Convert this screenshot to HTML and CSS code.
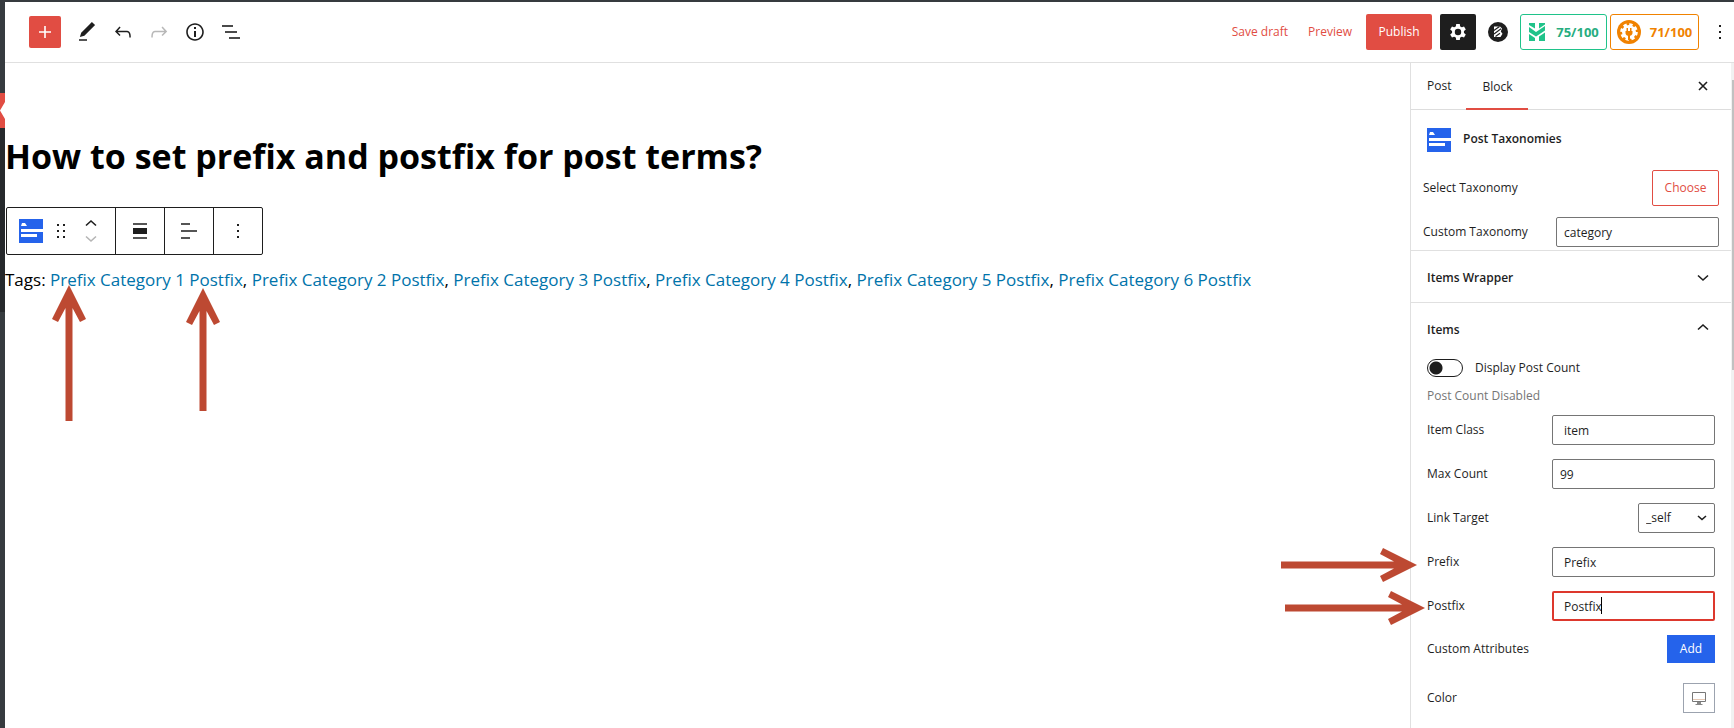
FILE: index.html
```html
<!DOCTYPE html>
<html lang="en">
<head>
<meta charset="utf-8">
<title>Edit Post</title>
<link rel="stylesheet" href="styles.css">
</head>
<body>
<div class="app">
  <div class="admin-strip"><span class="strip-top"></span><span class="strip-current"></span><span class="strip-submenu"></span></div>
  <div class="editor">
    <header class="topbar">
      <div class="tools">
        <button class="inserter" aria-label="Add block"><svg width="24" height="24" viewBox="0 0 24 24"><path d="M18 11.200h-5.200V6h-1.600v5.200H6v1.600h5.200V18h1.600v-5.200H18z" fill="#fff"/></svg></button>
        <button class="tool" aria-label="Tools"><svg width="24" height="24" viewBox="0 0 24 24"><path d="M20.100 5.100L16.900 2 6.200 12.700l-1.300 4.400 4.500-1.300L20.100 5.100z"/><path d="M4 19h8v2H4z" fill="#555"/></svg></button>
        <button class="tool" aria-label="Undo"><svg width="24" height="24" viewBox="0 0 24 24"><path d="M18.300 11.700c-.600-.600-1.400-.900-2.300-.900H6.700l2.900-3.300-1.100-1-4.500 5L8.500 16l1-1-2.700-2.700H16c.500 0 .900.200 1.300.500 1 1 1 3.400 1 4.500v.300h1.500v-.200c0-1.500 0-4.300-1.500-5.700z"/></svg></button>
        <button class="tool tool-off" aria-label="Redo"><svg width="24" height="24" viewBox="0 0 24 24"><path d="M15.600 6.500l-1.100 1 2.900 3.300H8c-.900 0-1.700.300-2.300.900-1.400 1.500-1.400 4.200-1.400 5.600v.200h1.500v-.300c0-1.100 0-3.500 1-4.500.300-.300.700-.500 1.300-.500h9.200L14.500 15l1.100 1.100 4.600-4.600-4.600-5z"/></svg></button>
        <button class="tool" aria-label="Details"><svg width="24" height="24" viewBox="0 0 24 24"><path d="M12 3.200c-4.800 0-8.800 3.900-8.800 8.800 0 4.800 3.900 8.800 8.800 8.800 4.800 0 8.800-3.900 8.800-8.800 0-4.800-4-8.800-8.800-8.800zm0 16c-4 0-7.200-3.300-7.200-7.200C4.800 8 8 4.800 12 4.800s7.200 3.300 7.200 7.200c0 4-3.200 7.200-7.200 7.200zM11 17h2v-6h-2v6zm0-8h2V7h-2v2z"/></svg></button>
        <button class="tool" aria-label="List view"><svg width="24" height="24" viewBox="0 0 24 24"><path d="M3 5h11v2H3zM6 11h12v2H6zM10 17h11v2H10z" fill="#4a4a4a"/></svg></button>
      </div>
      <div class="actions">
        <button class="text-btn">Save draft</button>
        <button class="text-btn">Preview</button>
        <button class="publish">Publish</button>
        <button class="settings" aria-label="Settings"><svg width="24" height="24" viewBox="0 0 24 24"><g fill="#fff"><path id="tooth" d="M10.200 4h3.600l.5 3.500h-4.600z"/><use href="#tooth" transform="rotate(60 12 12)"/><use href="#tooth" transform="rotate(120 12 12)"/><use href="#tooth" transform="rotate(180 12 12)"/><use href="#tooth" transform="rotate(240 12 12)"/><use href="#tooth" transform="rotate(300 12 12)"/></g><circle cx="12" cy="12" r="4.600" fill="none" stroke="#fff" stroke-width="2.800"/></svg></button>
        <button class="round" aria-label="Blocks"><svg width="20" height="20" viewBox="0 0 20 20"><circle cx="10" cy="10" r="10" fill="#1e1e1e"/><path d="M6 4.500h6l2 2-1.200 3 1.700 2.200-2 3.300H6z" fill="#fff"/><path d="M5.500 8.800L11.500 4.500M6 12l7-5.200M7.500 14.500l4.500-3.300" stroke="#1e1e1e" stroke-width="1.100"/></svg></button>
        <div class="scores">
          <button class="score score-green"><svg width="18" height="18" viewBox="0 0 18 18"><path d="M1 0h6v5.500L1 2zM11 0h6v1.500l-6 4zM1 4l7 5 9-6v4.500l-9 6L1 9zM1 11l6 4v3H1zM11 13.500l6-4V18h-6z" fill="#1fc38a"/></svg><span>75/100</span></button>
          <button class="score score-orange"><svg width="24" height="24" viewBox="0 0 24 24"><circle cx="12" cy="12" r="12" fill="#f08200"/><circle cx="12" cy="12" r="7" fill="#fff"/><circle cx="12" cy="12" r="7.500" fill="none" stroke="#fff" stroke-width="2.600" stroke-dasharray="3.400 2.490"/><path d="M9.500 8H11v3h2V8h1.500v3h1v2c0 1.500-1 2.500-2.500 2.800V20h-2v-4.200C9.500 15.500 8.500 14.500 8.500 13v-2h1z" fill="#f08200"/></svg><span>71/100</span></button>
        </div>
        <button class="more" aria-label="Options"><svg width="24" height="24" viewBox="0 0 24 24"><path d="M11 5h2v2h-2zM11 11h2v2h-2zM11 17h2v2h-2z"/></svg></button>
      </div>
    </header>
    <div class="workspace">
      <main class="canvas">
        <h1 class="title">How to set prefix and postfix for post terms?</h1>
        <div class="toolbar" role="toolbar" aria-label="Block tools">
          <div class="group group-main">
            <button class="tb block-type" aria-label="Post Taxonomies"><svg width="24" height="24" viewBox="0 0 24 24"><path id="tax-bg" d="M0 0h24v24H0z" fill="#2563eb"/><path id="tax-fg" d="M2 10h22v3H2zM2 15h16v3H2zM3 4h3l2 3H2z" fill="#fff"/></svg></button>
            <button class="tb drag" aria-label="Drag"><svg width="24" height="24" viewBox="0 0 24 24"><path d="M8 5h2v2H8zM14 5h2v2h-2zM8 11h2v2H8zM14 11h2v2h-2zM8 17h2v2H8zM14 17h2v2h-2z"/></svg></button>
            <div class="movers">
              <button class="tb" aria-label="Move up"><svg width="12" height="8" viewBox="0 0 12 8"><path d="M1 6.500l5-4.500 5 4.500" fill="none" stroke="#1e1e1e" stroke-width="1.600"/></svg></button>
              <button class="tb" aria-label="Move down"><svg width="12" height="8" viewBox="0 0 12 8"><path d="M1 1.500L6 6l5-4.500" fill="none" stroke="#b5b5b5" stroke-width="1.600"/></svg></button>
            </div>
          </div>
          <div class="group"><button class="tb" aria-label="Align"><svg width="24" height="24" viewBox="0 0 24 24"><path d="M5 4h14v2H5zM5 18h14v2H5z" fill="#555"/><path d="M5 9h14v6H5z"/></svg></button></div>
          <div class="group"><button class="tb" aria-label="Align text"><svg width="24" height="24" viewBox="0 0 24 24"><path d="M4 4h9v2H4zM4 11h16v2H4zM4 18h9v2H4z" fill="#555"/></svg></button></div>
          <div class="group"><button class="tb" aria-label="More"><svg width="24" height="24" viewBox="0 0 24 24"><path d="M11 5h2v2h-2zM11 11h2v2h-2zM11 17h2v2h-2z"/></svg></button></div>
        </div>
        <p class="terms">Tags: <a href="#">Prefix Category 1 Postfix</a>, <a href="#">Prefix Category 2 Postfix</a>, <a href="#">Prefix Category 3 Postfix</a>, <a href="#">Prefix Category 4 Postfix</a>, <a href="#">Prefix Category 5 Postfix</a>, <a href="#">Prefix Category 6 Postfix</a></p>
        <svg class="arrow arrow-first" width="34" height="136" viewBox="0 0 34 136"><path d="M17 0L34 34 28 37 20.500 23V136h-7V23L6 37 0 34z"/></svg>
        <svg class="arrow arrow-second" width="34" height="123" viewBox="0 0 34 123"><path d="M17 0L34 34 28 37 20.500 23V123h-7V23L6 37 0 34z"/></svg>
      </main>
      <aside class="sidebar">
        <div class="tabs">
          <button class="tab">Post</button>
          <button class="tab tab-active">Block</button>
          <button class="close" aria-label="Close settings"><svg width="10" height="10" viewBox="0 0 10 10"><path d="M1 1l8 8M9 1L1 9" stroke="#1e1e1e" stroke-width="1.600"/></svg></button>
        </div>
        <div class="card"><svg width="24" height="24" viewBox="0 0 24 24"><use href="#tax-bg"/><use href="#tax-fg"/></svg><h2 class="card-title">Post Taxonomies</h2></div>
        <div class="taxonomy">
          <div class="row"><span>Select Taxonomy</span><button class="choose">Choose</button></div>
          <div class="row"><label for="custom-tax">Custom Taxonomy</label><input class="field field-near" id="custom-tax" type="text" value="category"></div>
        </div>
        <section class="panel"><button class="panel-head">Items Wrapper<svg width="12" height="8" viewBox="0 0 12 8"><path d="M1 1.500L6 6l5-4.500" fill="none" stroke="#1e1e1e" stroke-width="1.600"/></svg></button></section>
        <section class="panel">
          <button class="panel-head">Items<svg class="up" width="12" height="8" viewBox="0 0 12 8"><path d="M1 6.500L6 2l5 4.500" fill="none" stroke="#1e1e1e" stroke-width="1.600"/></svg></button>
          <div class="panel-body">
            <label class="toggle-row"><input class="toggle" type="checkbox"><span>Display Post Count</span></label>
            <p class="hint">Post Count Disabled</p>
            <div class="fields">
              <div class="row"><label for="item-class">Item Class</label><input class="field" id="item-class" type="text" value="item"></div>
              <div class="row"><label for="max-count">Max Count</label><input class="field field-near" id="max-count" type="text" value="99"></div>
              <div class="row"><label for="target">Link Target</label><span class="select-wrap"><select class="select" id="target"><option>_self</option><option>_blank</option></select><svg class="select-arrow" width="10" height="6" viewBox="0 0 10 6"><path d="M1 1l4 3.500L9 1" fill="none" stroke="#1e1e1e" stroke-width="1.600"/></svg></span></div>
              <div class="row"><label for="prefix">Prefix</label><input class="field" id="prefix" type="text" value="Prefix"><svg class="arrow arrow-prefix" width="136" height="34" viewBox="0 0 136 34"><path d="M136 17L102 0 99 6 113 13.500H0v7H113L99 28l3 6z"/></svg></div>
              <div class="row"><label for="postfix">Postfix</label><span class="focus-wrap"><input class="field field-focus" id="postfix" type="text" value="Postfix"><span class="caret"></span></span><svg class="arrow arrow-postfix" width="140" height="34" viewBox="0 0 140 34"><path d="M140 17L106 0 103 6 117 13.500H0v7H117L103 28l3 6z"/></svg></div>
              <div class="row"><span>Custom Attributes</span><button class="add">Add</button></div>
              <div class="row row-color"><span>Color</span><button class="device" aria-label="Device"><svg width="14" height="13" viewBox="0 0 14 13"><path d="M.5.500h13v9H.5z" fill="none" stroke="#777"/><path d="M1 7.500h12" stroke="#e5c8b4"/><path d="M5 10h4v2H5zM3.500 12h7v1h-7z" fill="#888"/></svg></button></div>
            </div>
          </div>
        </section>
        <div class="scroll-track"><div class="scroll-thumb"></div></div>
      </aside>
    </div>
  </div>
</div>
</body>
</html>
```
FILE: styles.css
```css
* { box-sizing: border-box; }
body { margin: 0; background: #fff; color: #1e1e1e; font: 12px/20px "Open Sans", "Noto Sans", sans-serif; }
button, input, select { font: inherit; color: inherit; margin: 0; }
button { border: 0; padding: 0; background: none; display: flex; align-items: center; justify-content: center; cursor: pointer; }
svg { display: block; flex: none; fill: #1e1e1e; }
h1, h2, p { margin: 0; }

.app { display: flex; height: 100vh; overflow: hidden; border-top: 2px solid #363b3f; }
.admin-strip { width: 5px; flex: none; display: flex; flex-direction: column; background: linear-gradient(#363b3f 91px, #fff 91px 126px, #363b3f 126px); }
.strip-top { height: 91px; }
.strip-current { height: 35px; background: #e14d43; clip-path: polygon(0 0, 100% 0, 100% 26%, 0 50%, 100% 74%, 100% 100%, 0 100%); }
.strip-submenu { height: 184px; background: #26292c; }
.editor { flex: 1; min-width: 0; display: flex; flex-direction: column; }

.topbar { flex: none; height: 61px; display: flex; align-items: center; justify-content: space-between; padding: 0 2px 0 24px; border-bottom: 1px solid #e0e0e0; }
.tools, .actions, .scores { display: flex; align-items: center; }
.inserter { width: 32px; height: 32px; margin-right: 8px; background: #e14d43; border-radius: 2px; }
.tool { width: 36px; height: 36px; }
.tool-off svg { fill: #b8b8b8; }
.text-btn { color: #e14d43; margin-right: 20px; }
.text-btn + .publish { margin-left: -6px; }
.publish { width: 66px; height: 36px; color: #fff; background: #e14d43; border-radius: 2px; }
.settings { width: 36px; height: 36px; margin: 0 12px 0 8px; background: #1e1e1e; border-radius: 2px; }
.scores { gap: 3px; margin: 0 9px 0 12px; }
.score { height: 36px; border: 1px solid; border-radius: 3px; font-weight: 700; font-size: 13px; }
.score-green { width: 87px; gap: 10px; color: #1fc38a; }
.score-green span { color: #27ad7f; }
.score-orange { width: 89px; gap: 9px; color: #f08200; }

.workspace { flex: 1; min-height: 0; display: flex; }
.canvas { position: relative; flex: 1; min-width: 0; padding-top: 67px; }
.title { color: #000; font-size: 34px; line-height: 52px; font-weight: 700; }
.toolbar { display: flex; width: max-content; height: 48px; margin: 25px 0 0 1px; border: 1px solid #1e1e1e; border-radius: 2px; }
.group { display: flex; align-items: center; justify-content: center; width: 49px; border-left: 1px solid #1e1e1e; }
.group-main { width: 108px; border-left: 0; justify-content: flex-start; padding-left: 12px; }
.drag { margin-left: 6px; }
.movers { display: flex; flex-direction: column; gap: 8px; margin-left: 12px; }
.terms { margin-top: 11px; color: #000; font-size: 17px; line-height: 28px; }
.terms a { color: #0073aa; text-decoration: none; }

.arrow { position: absolute; fill: #bd4932; }
.arrow-first { left: 47px; top: 222px; }
.arrow-second { left: 181px; top: 225px; }
.arrow-prefix { right: 298px; top: 1px; }
.arrow-postfix { right: 290px; top: 0; }

.sidebar { position: relative; flex: none; width: 324px; padding-right: 3px; border-left: 1px solid #e0e0e0; }
.tabs { display: flex; height: 47px; border-bottom: 1px solid #ddd; }
.tab { padding: 0 15px 0 16px; font-weight: 500; }
.tab-active { margin-bottom: -1px; border-bottom: 2px solid #e14d43; border-top: 2px solid transparent; }
.close { width: 24px; margin: 0 16px 0 auto; }
.card { display: flex; gap: 12px; padding: 18px 16px; }
.card-title { font-size: 12px; line-height: 22px; font-weight: 600; }
.taxonomy { display: flex; flex-direction: column; gap: 11px; padding: 0 12px 3px 12px; }
.row { position: relative; display: flex; align-items: center; justify-content: space-between; }
.choose { width: 67px; height: 36px; color: #e14d43; border: 1px solid #e14d43; border-radius: 2px; }
.field { width: 163px; height: 30px; padding: 0 11px; background: #fff; border: 1px solid #757575; border-radius: 2px; outline: 0; }
.field-near { padding: 0 7px; }
.field-focus { display: block; padding: 0 10px; border: 2px solid #dd382d; }
.focus-wrap, .select-wrap { position: relative; }
.caret { position: absolute; left: 49px; top: 6px; width: 1px; height: 17px; background: #000; }
.panel { border-top: 1px solid #e0e0e0; }
.panel-head { width: 100%; height: 51px; justify-content: space-between; padding: 2px 22px 0 16px; font-weight: 600; }
.up { margin-bottom: 6px; }
.panel-body { padding: 0 16px; }
.toggle-row { display: flex; align-items: center; gap: 12px; margin-top: 4px; height: 20px; }
.toggle { appearance: none; width: 36px; height: 18px; margin: 0; border: 1px solid #1e1e1e; border-radius: 9px; background: radial-gradient(circle at 8px 8px, #1e1e1e 6px, transparent 7px); }
.hint { margin: 8px 0 9px; color: #757575; }
.fields { display: flex; flex-direction: column; gap: 14px; }
.select-wrap { display: block; width: 77px; height: 30px; }
.select { appearance: none; width: 100%; height: 100%; padding: 0 7px; background: #fff; border: 1px solid #757575; border-radius: 2px; }
.select-arrow { position: absolute; right: 8px; top: 12px; pointer-events: none; }
.add { width: 48px; height: 28px; color: #fff; background: #2563eb; }
.row-color { margin-top: 6px; }
.device { width: 32px; height: 30px; border: 1px solid #9ca3af; }
.scroll-track { position: absolute; top: 0; right: 0; bottom: 0; width: 3px; padding: 17px 0 0 1px; background: #f1f1f1; }
.scroll-thumb { height: 290px; background: #c1c1c1; }
```
